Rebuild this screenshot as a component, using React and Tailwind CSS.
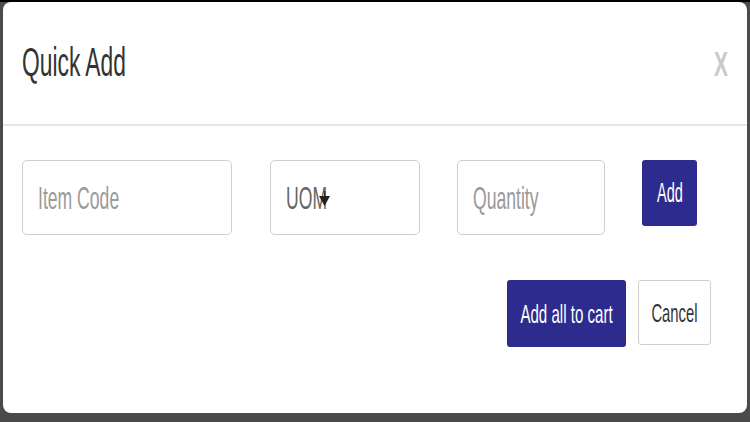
import React from "react";

// the screenshot is squeezed sideways, so text gets a horizontal scale
function Sq({ children, k = "scale-x-[0.56]", center }) {
  return (
    <span className={`inline-block whitespace-nowrap ${k} ${center ? "origin-center" : "origin-left"}`}>
      {children}
    </span>
  );
}

function Field({ label, w, muted = true, arrow }) {
  return (
    <div
      className={`relative flex h-[75px] shrink-0 items-center overflow-hidden rounded-[5px] border border-[#cfcfcf] bg-white pl-[15px] ${w}`}
    >
      <span className={`text-[32px] leading-none ${muted ? "text-[#9a9a9a]" : "text-[#666]"}`}>
        <Sq k="scale-x-[0.55]">{label}</Sq>
      </span>
      {arrow && (
        <svg className="absolute left-[48px] top-[30px]" width="11" height="16" viewBox="0 0 11 16">
          <rect x="5" y="0" width="1.5" height="6" fill="#333" />
          <path d="M0 5 L11 5 L5.5 15 Z" fill="#222" />
        </svg>
      )}
    </div>
  );
}

export default function App() {
  return (
    <div
      className="h-[422px] w-[750px] overflow-hidden border-t-2 border-black bg-[#4b4b4b] pl-[3px]"
      style={{ fontFamily: '"Liberation Sans", Arial, sans-serif' }}
    >
      <div className="flex h-[411px] w-[744px] flex-col rounded-lg bg-white">
        {/* header */}
        <div className="flex h-[124px] shrink-0 items-center justify-between border-b-2 border-[#e7e7e7] pl-[19px] pr-[19px]">
          <h1 className="pb-[2px] text-[40px] leading-none text-[#333]">
            <Sq k="scale-x-[0.57]">Quick Add</Sq>
          </h1>
          <span className="w-[14px] text-[35px] font-bold leading-none text-[#c9c9c9]">
            <Sq k="scale-x-[0.6]">X</Sq>
          </span>
        </div>

        {/* body */}
        <div className="flex flex-col pl-[19px] pr-[36px] pt-[34px]">
          <div className="flex items-start">
            <Field label="Item Code" w="w-[210px]" />
            <div className="ml-[38px]">
              <Field label="UOM" w="w-[150px]" muted={false} arrow />
            </div>
            <div className="ml-[37px]">
              <Field label="Quantity" w="w-[148px]" />
            </div>
            <button className="ml-[37px] flex h-[66px] w-[55px] items-center justify-center rounded-[3px] bg-[#2e2b8f] text-[28px] leading-none text-white">
              <Sq k="scale-x-[0.52]" center>Add</Sq>
            </button>
          </div>

          <div className="mt-[45px] flex justify-end gap-[12px]">
            <button className="flex h-[67px] w-[119px] items-center justify-center rounded-[3px] bg-[#2e2b8f] text-[26px] leading-none text-white">
              <Sq k="scale-x-[0.58]" center>Add all to cart</Sq>
            </button>
            <button className="flex h-[65px] w-[73px] items-center justify-center rounded-[3px] border border-[#cfcfcf] bg-white text-[26px] leading-none text-[#333]">
              <Sq k="scale-x-[0.57]" center>Cancel</Sq>
            </button>
          </div>
        </div>
      </div>
    </div>
  );
}
